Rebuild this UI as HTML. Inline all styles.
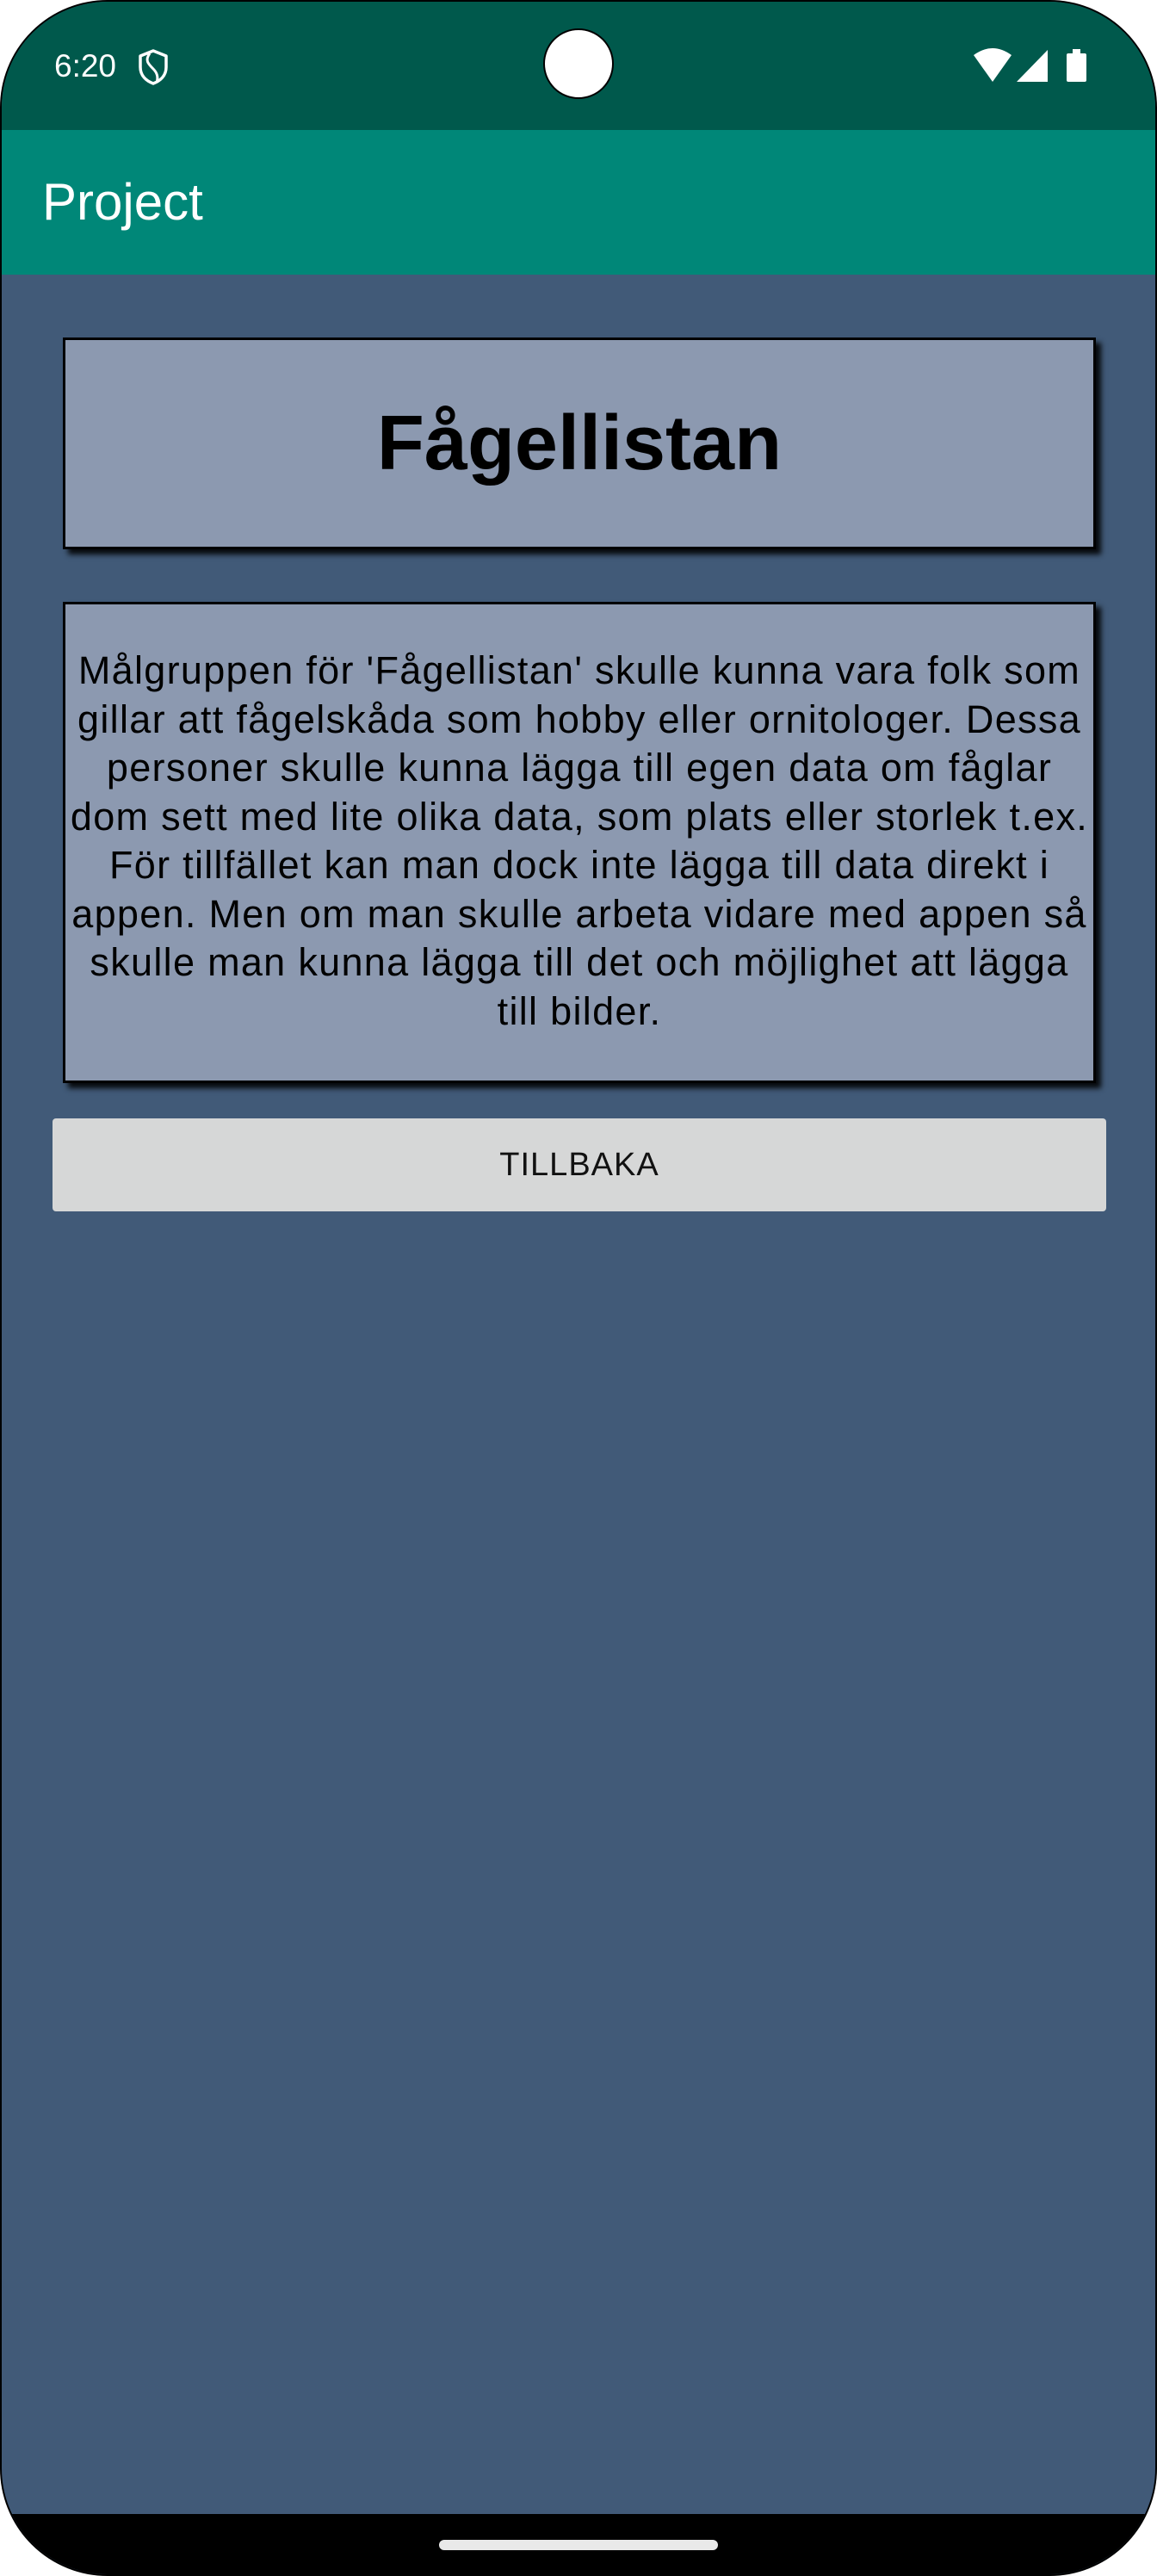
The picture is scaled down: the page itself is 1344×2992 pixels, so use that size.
<!DOCTYPE html>
<html><head><meta charset="utf-8"><style>
html,body{margin:0;padding:0;background:#fff;}
body{width:1344px;height:2992px;position:relative;overflow:hidden;font-family:"Liberation Sans",sans-serif;}
.screen{position:absolute;left:0;top:0;width:1340px;height:2988px;border:2px solid #000;border-radius:125px;overflow:hidden;background:#415a78;}
.status{position:absolute;left:0;top:0;width:100%;height:149px;background:#00594c;}
.appbar{position:absolute;left:0;top:149px;width:100%;height:168px;background:#008778;}
.nav{position:absolute;left:0;top:2918px;width:100%;height:80px;background:#000;}
.pill{position:absolute;left:508px;top:2948px;width:324px;height:12px;border-radius:6px;background:#e9e9e9;}
.box{position:absolute;left:71px;background:#8c99b0;border:3px solid #000;box-shadow:6px 6px 6px rgba(0,0,0,0.9);box-sizing:border-box;}
.t1{top:390px;width:1200px;height:246px;font-weight:bold;font-size:90px;text-align:center;line-height:240px;}
.t2{top:697px;width:1200px;height:559px;font-size:45px;line-height:56.5px;text-align:center;padding-top:49px;letter-spacing:1.3px;}
.t2 span{display:block;white-space:nowrap;margin:0 -40px;}
.btn{position:absolute;left:59px;top:1297px;width:1224px;height:108px;background:#d6d7d7;border-radius:4px;text-align:center;line-height:108px;font-size:38px;letter-spacing:1px;color:#111;}
</style></head><body>
<div class="screen">
<div class="status"></div>
<div class="appbar"></div>
<div style="position:absolute;left:61px;top:50px;color:#fff;font-size:37px;line-height:50px;">6:20</div>
<svg style="position:absolute;left:156px;top:54px" width="40" height="44" viewBox="0 0 40 44"><path d="M20 3 L35 9 V22 C35 32 28 38 20 41 C12 38 5 32 5 22 V9 Z" fill="none" stroke="#fff" stroke-width="3.5" stroke-linejoin="round"/><path d="M16 6 C10 14 14 18 20 24 C25 29 26 34 24 40" fill="none" stroke="#fff" stroke-width="3"/></svg>
<svg style="position:absolute;left:1126px;top:52px" width="140" height="44" viewBox="0 0 140 44"><path d="M25 41 L3 10 Q25 -6 47 10 Z" fill="#fff"/><path d="M53 41 L89 41 L89 4 Z" fill="#fff"/><rect x="111" y="8" width="23" height="33" rx="2" fill="#fff"/><rect x="118" y="3" width="9" height="6" fill="#fff"/></svg>
<div style="position:absolute;left:629px;top:31px;width:82px;height:82px;border-radius:50%;background:#fff;border:2px solid #000;box-sizing:border-box;"></div>
<div style="position:absolute;left:47px;top:198px;color:#fff;font-size:60px;line-height:70px;font-weight:500;">Project</div>
<div class="box t1">Fågellistan</div>
<div class="box t2"><span>Målgruppen för 'Fågellistan' skulle kunna vara folk som</span><span>gillar att fågelskåda som hobby eller ornitologer. Dessa</span><span>personer skulle kunna lägga till egen data om fåglar</span><span>dom sett med lite olika data, som plats eller storlek t.ex.</span><span>För tillfället kan man dock inte lägga till data direkt i</span><span>appen. Men om man skulle arbeta vidare med appen så</span><span>skulle man kunna lägga till det och möjlighet att lägga</span><span>till bilder.</span></div>
<div class="btn">TILLBAKA</div>
<div class="nav"></div>
<div class="pill"></div>
</div>
</body></html>
